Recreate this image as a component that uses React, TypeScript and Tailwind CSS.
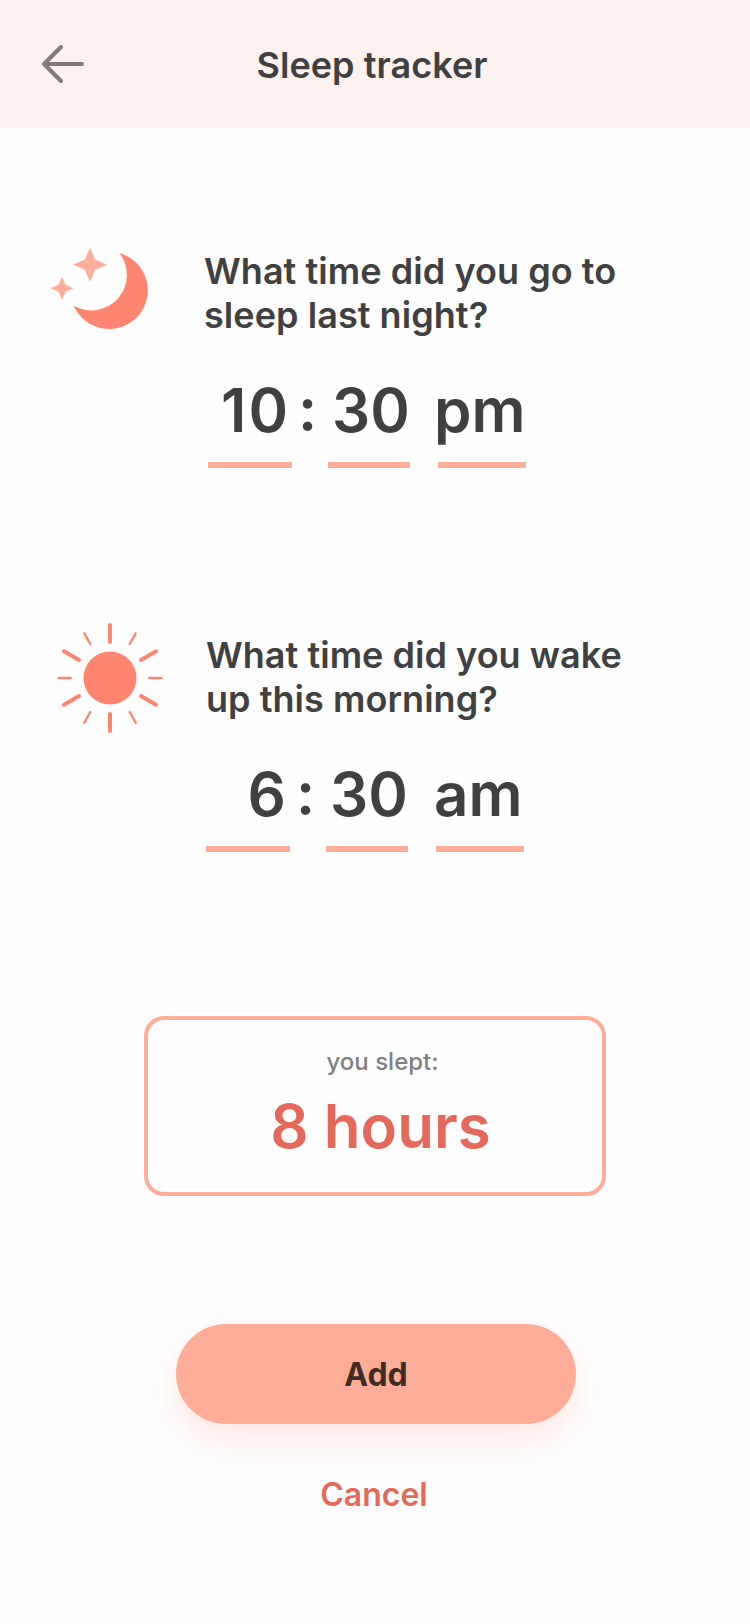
type TimeProps = { hour: string; minute: string; period: string };

function ArrowLeftIcon() {
  return (
    <svg width="44" height="40" viewBox="0 0 44 40" fill="none" stroke="#807a79" strokeWidth="4" strokeLinecap="round" strokeLinejoin="round">
      <path d="M20 3 3 20l17 17M3.500 20H41" />
    </svg>
  );
}

function MoonIcon() {
  return (
    <svg width="120" height="105" viewBox="0 0 360 315" className="shrink-0">
      <path fill="#ff8570" d="M238 54A116 116 0 1 1 101 212A106.500 106.500 0 0 0 238 54Z" />
      <path fill="#ffad98" d="M150 38L165.500 73.500L201 89L165.500 104.500L150 140L134.500 104.500L99 89L134.500 73.500Z" />
      <path fill="#ffad98" d="M66 126L76.500 149.500L100 160L76.500 170.500L66 194L55.500 170.500L32 160L55.500 149.500Z" />
    </svg>
  );
}

function SunIcon() {
  return (
    <svg width="120" height="125" viewBox="0 0 360 375" className="shrink-0" stroke="#ff8570" strokeLinecap="round">
      <circle cx="180" cy="189" r="79.500" fill="#ff8570" stroke="none" />
      <path strokeWidth="12" d="M180 30V81M180 297V348M42 109L87 135M318 109L273 135M42 269L87 243M318 269L273 243" />
      <path strokeWidth="7" d="M25 189H62M298 189H335M103 55L121 87M257 55L239 87M103 323L121 291M257 323L239 291" />
    </svg>
  );
}

function TimeInput({ hour, minute, period }: TimeProps) {
  return (
    <div className="flex h-[94px] text-[60px] leading-[72px] font-semibold">
      <div className="w-[84px] border-b-6 border-[#ffad98] pr-[2px] text-right tracking-[2px]">{hour}</div>
      <div className="-mt-[2px] w-9 pl-[6px]">:</div>
      <div className="w-[82px] border-b-6 border-[#ffad98] pl-1">{minute}</div>
      <div className="ml-7 w-[88px] border-b-6 border-[#ffad98]">
        <span className={period === "am" ? "-ml-[2px]" : "-ml-1"}>{period}</span>
      </div>
    </div>
  );
}

export default function App() {
  return (
    <div className="flex h-[1624px] w-[750px] flex-col bg-[#fefefe] font-['Inter',sans-serif] text-[#404040]">
      <header className="grid h-32 grid-cols-[256px_1fr] bg-[#fbf1ef]">
        <button className="mt-11 ml-[41px] h-10 w-11" aria-label="Back">
          <ArrowLeftIcon />
        </button>
        <h1 className="mt-[43px] ml-[0.5px] text-[36px] leading-[44px] font-semibold tracking-[0.05px]">Sleep tracker</h1>
      </header>

      <section className="flex h-[384px] pt-[107px] pl-10">
        <MoonIcon />
        <div className="pt-[14px] pl-11">
          <h2 className="text-[36px] leading-[44px] font-semibold tracking-[0.06px]">
            What time did you go to
            <br />
            sleep last night?
          </h2>
          <div className="mt-[37px] ml-1">
            <TimeInput hour="10" minute="30" period="pm" />
          </div>
        </div>
      </section>

      <section className="flex h-[504px] pt-[103px] pl-[50px]">
        <SunIcon />
        <div className="pt-[18px] pl-9">
          <h2 className="text-[36px] leading-[44px] font-semibold tracking-[0.04px]">
            What time did you wake
            <br />
            up this morning?
          </h2>
          <div className="mt-[37px]">
            <TimeInput hour="6" minute="30" period="am" />
          </div>
        </div>
      </section>

      <section className="ml-36 flex h-[180px] w-[462px] flex-col items-center rounded-[20px] border-4 border-[#ffad98] pt-[27px] pl-[11px]">
        <p className="ml-1 text-2xl leading-[29px] font-medium text-[#808080]">you slept:</p>
        <p className="mt-[14px] text-[60px] leading-[72px] font-semibold text-[#e5695b]">8 hours</p>
      </section>

      <div className="mt-32 ml-44 flex w-[400px] flex-col items-center">
        <button className="h-[100px] w-full rounded-full bg-[#ffad98] pt-[2px] text-[32px] leading-10 font-bold text-[#402b26] shadow-[0_16px_32px_rgba(255,140,115,0.19)]">
          Add
        </button>
        <button className="mt-[51px] -ml-1 text-[32px] leading-10 font-semibold text-[#e5695b]">Cancel</button>
      </div>
    </div>
  );
}
